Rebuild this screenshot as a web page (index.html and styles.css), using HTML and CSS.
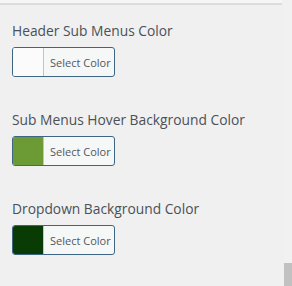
FILE: index.html
```html
<!DOCTYPE html>
<html lang="en">
  <head>
    <meta charset="UTF-8" />
    <meta name="viewport" content="width=device-width, initial-scale=1.0" />
    <title>Menu Colors</title>
    <link rel="stylesheet" href="styles.css">
  </head>
  <body>
    <div class="top-bar"></div>
    <div class="settings">
      <div class="field">
        <span class="field-label">Header Sub Menus Color</span>
        <button class="color-result" type="button">
          <span class="swatch swatch-white"></span>
          <span class="color-text">Select Color</span>
        </button>
      </div>
      <div class="field">
        <span class="field-label">Sub Menus Hover Background Color</span>
        <button class="color-result" type="button">
          <span class="swatch swatch-green"></span>
          <span class="color-text">Select Color</span>
        </button>
      </div>
      <div class="field">
        <span class="field-label">Dropdown Background Color</span>
        <button class="color-result" type="button">
          <span class="swatch swatch-dark"></span>
          <span class="color-text">Select Color</span>
        </button>
      </div>
    </div>
    <div class="scroll-track"><div class="scroll-thumb"></div></div>
  </body>
</html>
```

FILE: styles.css
```css
body {
  font-family: "Open Sans", "Noto Sans", sans-serif;
  margin: 0;
  padding: 0;
  background-color: #f0f0f1;
  height: 286px;
  overflow: hidden;
}

.top-bar {
  width: 282px;
  height: 3px;
  background-color: #f6f6f6;
  border-bottom: 2px solid #dcdcde;
}

.settings {
  display: flex;
  flex-direction: column;
  padding: 16px 12px 0 12px;
  gap: 33px;
}

.field {
  display: flex;
  flex-direction: column;
  align-items: flex-start;
}

.field-label {
  font-size: 13.8px;
  line-height: 20px;
  color: #4a5157;
  font-weight: 500;
  margin-bottom: 6px;
}

.color-result {
  display: flex;
  align-items: stretch;
  width: 103px;
  height: 30px;
  padding: 0;
  border: 1px solid #3f6584;
  border-radius: 3px;
  background-color: #f6f7f7;
  overflow: hidden;
  cursor: pointer;
}

.swatch {
  width: 30px;
  border-right: 1px solid #c3c4c7;
}

.swatch-white {
  background-color: #fbfbfb;
}

.swatch-green {
  background-color: #6c9a34;
}

.swatch-dark {
  background-color: #093c05;
}

.color-text {
  flex: 1;
  display: flex;
  align-items: center;
  padding-left: 6px;
  font-family: "Open Sans", "Noto Sans", sans-serif;
  font-size: 11px;
  color: #50575e;
}

/* fake scrollbar on the right edge */
.scroll-track {
  position: absolute;
  top: 0;
  right: 0;
  width: 9px;
  height: 286px;
  background-color: #f1f1f1;
}

.scroll-thumb {
  position: absolute;
  bottom: 0;
  left: 1px;
  width: 8px;
  height: 23px;
  background-color: #c1c1c1;
}
```
